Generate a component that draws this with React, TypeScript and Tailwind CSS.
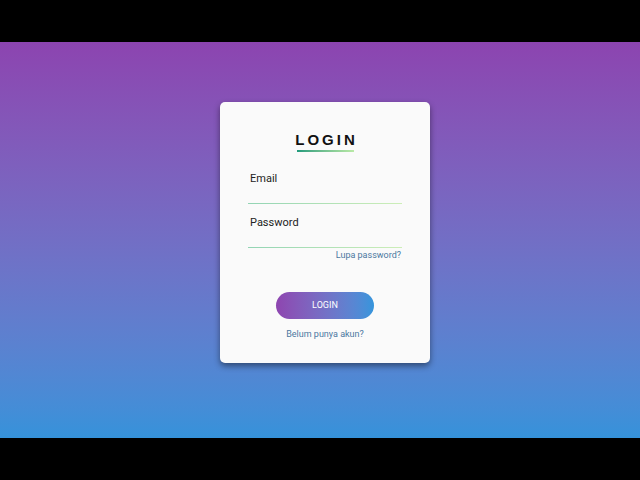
export default function App() {
  return (
    <div className="flex h-[480px] w-[640px] flex-col bg-black" style={{ fontFamily: "Roboto, 'Liberation Sans', sans-serif" }}>
      <div className="h-[42px] bg-black" />
      <div className="flex h-[396px] justify-center bg-gradient-to-b from-[#8c44b0] to-[#3592da] pl-[10px] pt-[60px]">
        <div className="flex h-[261px] w-[210px] flex-col rounded-[5px] bg-[#fafafa] px-[28px] pt-[30px] shadow-[0_3px_6px_rgba(0,0,0,0.45)]">
          <div className="flex flex-col items-center">
            <div className="h-[16px] pl-[3px] text-[15px] font-bold leading-[16px] tracking-[3px] text-[#111]" style={{ fontFamily: "'Liberation Sans', Arial, sans-serif" }}>
              LOGIN
            </div>
            <div className="mt-[2px] h-[2px] w-[57px] bg-gradient-to-r from-[#1e9b7c] to-[#b9eaa6]" />
          </div>

          <div className="mt-[20px] h-[14px] pl-[2px] text-[11px] leading-[14px] text-[#222]">Email</div>
          <div className="h-[17px]" />
          <div className="h-[1px] bg-gradient-to-r from-[#92d4b4] to-[#cdeeb8]" />

          <div className="mt-[12px] h-[14px] pl-[2px] text-[11px] leading-[14px] text-[#222]">Password</div>
          <div className="h-[17px]" />
          <div className="h-[1px] bg-gradient-to-r from-[#92d4b4] to-[#cdeeb8]" />

          <div className="mt-[1px] h-[12px] pr-[1px] text-right text-[9px] leading-[12px] text-[#4b78a0]">Lupa password?</div>

          <div className="mt-[31px] flex justify-center">
            <button className="h-[27px] w-[98px] rounded-full bg-gradient-to-r from-[#8e45b0] to-[#3495dc] text-[9px] text-white">
              LOGIN
            </button>
          </div>

          <div className="mt-[9px] h-[12px] text-center text-[9px] leading-[12px] text-[#4b78a0]">Belum punya akun?</div>
        </div>
      </div>
      <div className="h-[42px] bg-black" />
    </div>
  );
}
